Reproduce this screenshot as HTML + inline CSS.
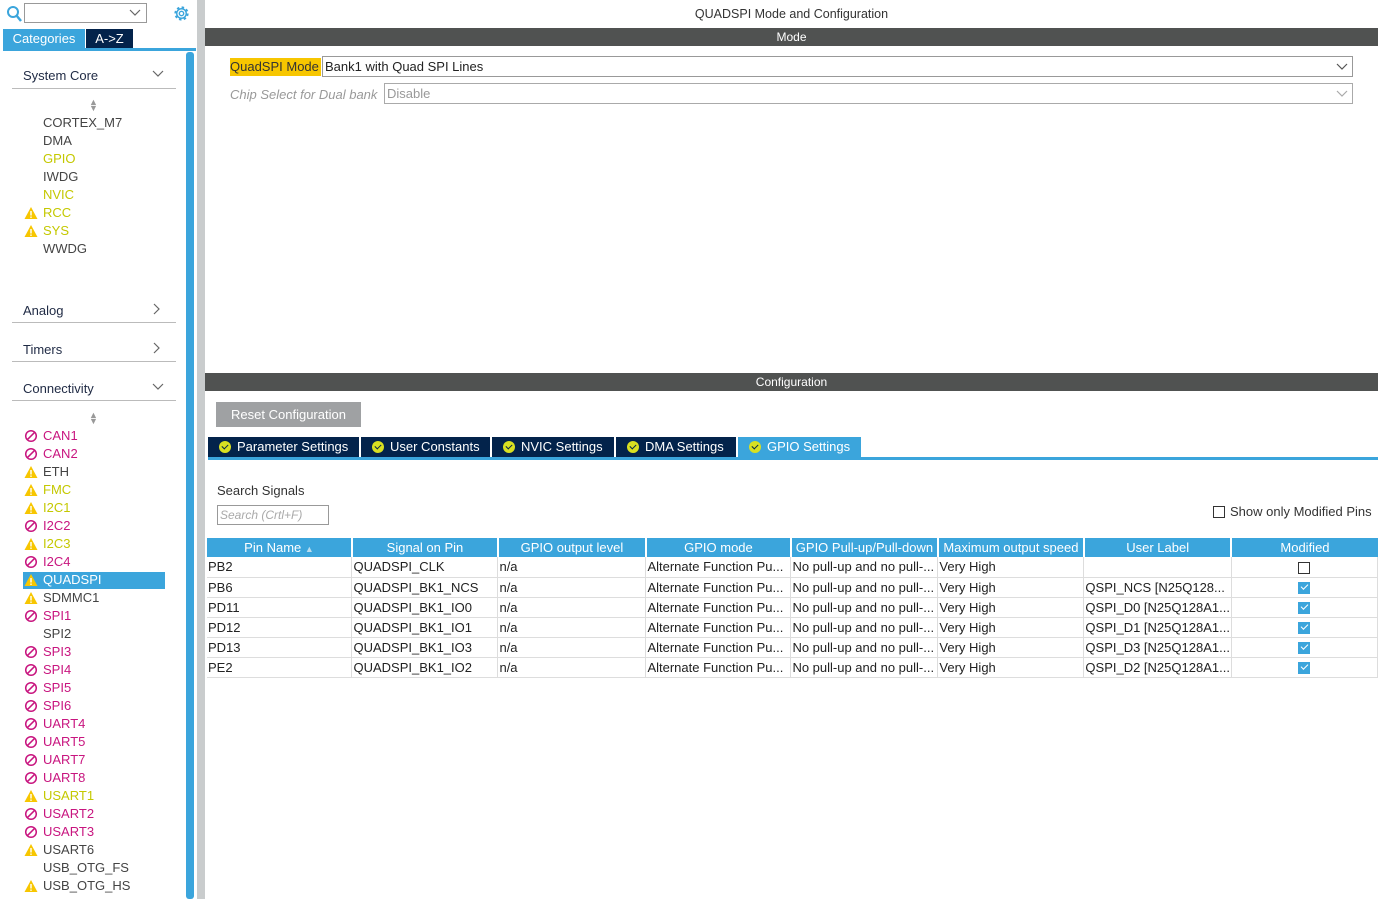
<!DOCTYPE html>
<html><head><style>
*{margin:0;padding:0;box-sizing:border-box}
body{width:1378px;height:899px;position:relative;overflow:hidden;background:#fff;font-family:"Liberation Sans",sans-serif;font-size:13px;color:#333}
.a{position:absolute}
.mag{color:#c8157f}.yel{color:#c4c800}.blk{color:#444}
.item{position:absolute;left:43px;font-size:13px;line-height:18px}
.ic{position:absolute;left:24px;width:14px;height:14px}
.hdr{position:absolute;left:23px;font-size:13px;color:#1f2a44}
.sep{position:absolute;left:12px;width:164px;height:1px;background:#bbb}
.bar{position:absolute;left:205px;right:0;height:18px;background:#505251;color:#fff;text-align:center;font-size:12px;line-height:18px}
.tab{position:absolute;top:437px;height:20px;background:#03234b;color:#fff;font-size:13px;line-height:20px;padding-left:29px}
.tab i{position:absolute;left:11px;top:4px;width:12px;height:12px;border-radius:50%;background:#d9e021}
.tab i:after{content:"";position:absolute;left:3px;top:3px;width:5px;height:3px;border-left:1.5px solid #03234b;border-bottom:1.5px solid #03234b;transform:rotate(-45deg)}
table{position:absolute;left:207px;top:538px;border-collapse:collapse;font-size:13px}
th{background:#3ba5dc;color:#fff;font-weight:normal;height:19px;border-left:2px solid #fff;padding:0;text-align:center}
td{height:20px;border-bottom:1px solid #ddd;border-right:1px solid #ddd;padding:0 1px;white-space:nowrap;color:#222}
.cb{display:inline-block;width:12px;height:12px;border:1px solid #333;vertical-align:middle}
.ck{display:inline-block;width:12px;height:12px;background:#3ba5dc;vertical-align:middle;position:relative}
.ck:after{content:"";position:absolute;left:3px;top:2px;width:6px;height:3px;border-left:1.5px solid #fff;border-bottom:1.5px solid #fff;transform:rotate(-45deg)}
</style></head><body>
<svg class="a" style="left:6px;top:5px" width="16" height="18"><circle cx="7" cy="7" r="5" fill="none" stroke="#3ba5dc" stroke-width="2"/><line x1="10.5" y1="10.5" x2="15" y2="16" stroke="#3ba5dc" stroke-width="2.5"/></svg>
<div class="a" style="left:24px;top:3px;width:123px;height:20px;border:1px solid #999"></div>
<svg class="a" style="left:129px;top:9px" width="12" height="8"><polyline points="1,1 6,6 11,1" fill="none" stroke="#666" stroke-width="1.2"/></svg>
<svg class="a" style="left:172px;top:4px" width="19" height="19" viewBox="0 0 20 20"><circle cx="10" cy="10" r="6" fill="none" stroke="#3ba5dc" stroke-width="3" stroke-dasharray="2.4 2.3"/><circle cx="10" cy="10" r="5" fill="none" stroke="#3ba5dc" stroke-width="1.5"/><circle cx="10" cy="10" r="2.3" fill="none" stroke="#3ba5dc" stroke-width="1.5"/></svg>
<div class="a" style="left:3px;top:29px;width:82px;height:20px;background:#3ba5dc;color:#fff;font-size:13px;line-height:20px;text-align:center">Categories</div>
<div class="a" style="left:86px;top:29px;width:47px;height:20px;background:#03234b;color:#fff;font-size:13px;line-height:20px;text-align:center">A-&gt;Z</div>
<div class="a" style="left:3px;top:48px;width:193px;height:3px;background:#3ba5dc"></div>
<div class="a" style="left:186px;top:52px;width:8px;height:847px;background:#3ba5dc;border-radius:3px"></div>
<div class="a" style="left:197px;top:0;width:8px;height:899px;background:#c9cccd"></div>

<div class="hdr" style="top:68px">System Core</div>
<svg class="a" style="left:152px;top:70px" width="12" height="8"><polyline points="1,1 6,6 11,1" fill="none" stroke="#666" stroke-width="1.2"/></svg>
<div class="sep" style="top:88px"></div>
<div class="a" style="left:89px;top:99px;color:#999;font-size:9px;line-height:6px">▲<br>▼</div>
<div class="item blk" style="top:114px">CORTEX_M7</div>
<div class="item blk" style="top:132px">DMA</div>
<div class="item yel" style="top:150px">GPIO</div>
<div class="item blk" style="top:168px">IWDG</div>
<div class="item yel" style="top:186px">NVIC</div>
<svg class="ic" style="top:206px" viewBox="0 0 14 14"><polygon points="7,1 13.5,13 0.5,13" fill="#f7c600"/><rect x="6.3" y="5" width="1.4" height="4.5" fill="#fff"/><rect x="6.3" y="10.5" width="1.4" height="1.4" fill="#fff"/></svg>
<div class="item yel" style="top:204px">RCC</div>
<svg class="ic" style="top:224px" viewBox="0 0 14 14"><polygon points="7,1 13.5,13 0.5,13" fill="#f7c600"/><rect x="6.3" y="5" width="1.4" height="4.5" fill="#fff"/><rect x="6.3" y="10.5" width="1.4" height="1.4" fill="#fff"/></svg>
<div class="item yel" style="top:222px">SYS</div>
<div class="item blk" style="top:240px">WWDG</div>

<div class="hdr" style="top:303px">Analog</div>
<svg class="a" style="left:153px;top:303px" width="8" height="12"><polyline points="1,1 6,6 1,11" fill="none" stroke="#666" stroke-width="1.2"/></svg>
<div class="sep" style="top:322px"></div>
<div class="hdr" style="top:342px">Timers</div>
<svg class="a" style="left:153px;top:342px" width="8" height="12"><polyline points="1,1 6,6 1,11" fill="none" stroke="#666" stroke-width="1.2"/></svg>
<div class="sep" style="top:361px"></div>
<div class="hdr" style="top:381px">Connectivity</div>
<svg class="a" style="left:152px;top:383px" width="12" height="8"><polyline points="1,1 6,6 11,1" fill="none" stroke="#666" stroke-width="1.2"/></svg>
<div class="sep" style="top:400px"></div>
<div class="a" style="left:89px;top:412px;color:#999;font-size:9px;line-height:6px">▲<br>▼</div>
<div class="a" style="left:23px;top:572px;width:142px;height:17px;background:#3ba5dc"></div>
<div id="conn"></div>
<script>
var L=[["CAN1","m"],["CAN2","m"],["ETH","bw"],["FMC","yw"],["I2C1","yw"],["I2C2","m"],["I2C3","yw"],["I2C4","m"],["QUADSPI","q"],["SDMMC1","bw"],["SPI1","m"],["SPI2","b"],["SPI3","m"],["SPI4","m"],["SPI5","m"],["SPI6","m"],["UART4","m"],["UART5","m"],["UART7","m"],["UART8","m"],["USART1","yw"],["USART2","m"],["USART3","m"],["USART6","bw"],["USB_OTG_FS","b"],["USB_OTG_HS","bw"]];
var h="";L.forEach(function(e,i){var t=427+i*18,k=e[1],c=k=="m"?"mag":k[0]=="y"?"yel":"blk",st=k=="q"?"color:#fff":"";
if(k=="m")h+='<svg class="ic" style="top:'+(t+2)+'px" viewBox="0 0 14 14"><circle cx="7" cy="7" r="5.3" fill="none" stroke="#c8157f" stroke-width="1.5"/><line x1="3.3" y1="10.7" x2="10.7" y2="3.3" stroke="#c8157f" stroke-width="1.5"/></svg>';
if(k[1]=="w"||k=="q")h+='<svg class="ic" style="top:'+(t+2)+'px" viewBox="0 0 14 14"><polygon points="7,1 13.5,13 0.5,13" fill="#f7c600"/><rect x="6.3" y="5" width="1.4" height="4.5" fill="#fff"/><rect x="6.3" y="10.5" width="1.4" height="1.4" fill="#fff"/></svg>';
h+='<div class="item '+c+'" style="top:'+t+'px;'+st+'">'+e[0]+'</div>';});
document.getElementById("conn").innerHTML=h;
</script>

<div class="a" style="left:205px;width:1173px;top:7px;text-align:center;font-size:12.5px;color:#333">QUADSPI Mode and Configuration</div>
<div class="bar" style="top:28px">Mode</div>
<div class="a" style="left:230px;top:58px;height:18px;background:#f7c600;color:#333;font-size:13px;line-height:18px;padding:0 2px 0 0">QuadSPI Mode</div>
<div class="a" style="left:322px;top:56px;width:1031px;height:21px;border:1px solid #999;font-size:13px;line-height:20px;padding-left:2px;color:#222">Bank1 with Quad SPI Lines</div>
<svg class="a" style="left:1336px;top:63px" width="12" height="8"><polyline points="1,1 6,6 11,1" fill="none" stroke="#555" stroke-width="1.2"/></svg>
<div class="a" style="left:230px;top:87px;font-size:13px;font-style:italic;color:#999">Chip Select for Dual bank</div>
<div class="a" style="left:384px;top:83px;width:969px;height:21px;border:1px solid #aaa;font-size:13px;line-height:20px;padding-left:2px;color:#999">Disable</div>
<svg class="a" style="left:1336px;top:90px" width="12" height="8"><polyline points="1,1 6,6 11,1" fill="none" stroke="#aaa" stroke-width="1.2"/></svg>

<div class="bar" style="top:373px">Configuration</div>
<div class="a" style="left:216px;top:402px;width:145px;height:25px;background:#9fa1a3;color:#fff;font-size:13px;line-height:25px;text-align:center">Reset Configuration</div>
<div class="tab" style="left:208px;width:151px"><i></i>Parameter Settings</div>
<div class="tab" style="left:361px;width:129px"><i></i>User Constants</div>
<div class="tab" style="left:492px;width:122px"><i></i>NVIC Settings</div>
<div class="tab" style="left:616px;width:120px"><i></i>DMA Settings</div>
<div class="tab" style="left:738px;width:123px;background:#3ba5dc"><i></i>GPIO Settings</div>
<div class="a" style="left:208px;top:457px;width:1170px;height:3px;background:#3ba5dc"></div>
<div class="a" style="left:217px;top:483px;font-size:13px;color:#333">Search Signals</div>
<div class="a" style="left:217px;top:505px;width:112px;height:20px;border:1px solid #999;font-size:12px;font-style:italic;color:#aaa;line-height:18px;padding-left:2px">Search (Crtl+F)</div>
<div class="a" style="left:1213px;top:506px;width:12px;height:12px;border:1px solid #333"></div>
<div class="a" style="left:1230px;top:504px;font-size:13px;color:#333">Show only Modified Pins</div>

<table>
<tr><th style="width:145px;border-left:0">Pin Name <span style="color:#bde;font-size:9px">▲</span></th><th style="width:146px">Signal on Pin</th><th style="width:148px">GPIO output level</th><th style="width:145px">GPIO mode</th><th style="width:147px">GPIO Pull-up/Pull-down</th><th style="width:146px">Maximum output speed</th><th style="width:147px">User Label</th><th style="width:146px">Modified</th></tr>
<tr><td>PB2</td><td>QUADSPI_CLK</td><td>n/a</td><td>Alternate Function Pu...</td><td>No pull-up and no pull-...</td><td>Very High</td><td></td><td style="text-align:center"><span class="cb"></span></td></tr>
<tr><td>PB6</td><td>QUADSPI_BK1_NCS</td><td>n/a</td><td>Alternate Function Pu...</td><td>No pull-up and no pull-...</td><td>Very High</td><td>QSPI_NCS [N25Q128...</td><td style="text-align:center"><span class="ck"></span></td></tr>
<tr><td>PD11</td><td>QUADSPI_BK1_IO0</td><td>n/a</td><td>Alternate Function Pu...</td><td>No pull-up and no pull-...</td><td>Very High</td><td>QSPI_D0 [N25Q128A1...</td><td style="text-align:center"><span class="ck"></span></td></tr>
<tr><td>PD12</td><td>QUADSPI_BK1_IO1</td><td>n/a</td><td>Alternate Function Pu...</td><td>No pull-up and no pull-...</td><td>Very High</td><td>QSPI_D1 [N25Q128A1...</td><td style="text-align:center"><span class="ck"></span></td></tr>
<tr><td>PD13</td><td>QUADSPI_BK1_IO3</td><td>n/a</td><td>Alternate Function Pu...</td><td>No pull-up and no pull-...</td><td>Very High</td><td>QSPI_D3 [N25Q128A1...</td><td style="text-align:center"><span class="ck"></span></td></tr>
<tr><td>PE2</td><td>QUADSPI_BK1_IO2</td><td>n/a</td><td>Alternate Function Pu...</td><td>No pull-up and no pull-...</td><td>Very High</td><td>QSPI_D2 [N25Q128A1...</td><td style="text-align:center"><span class="ck"></span></td></tr>
</table>
</body></html>
